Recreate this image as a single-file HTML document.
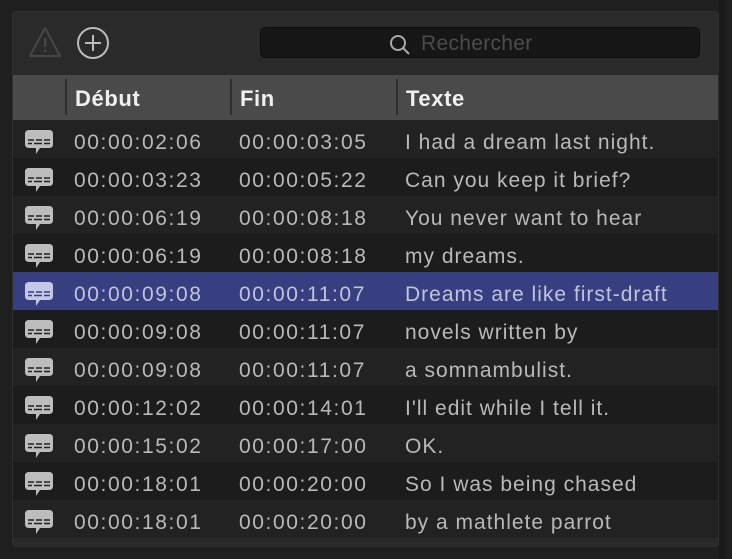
<!DOCTYPE html>
<html><head><meta charset="utf-8"><style>
body{margin:0;width:732px;height:559px;background:#1f1f1f;font-family:"Liberation Sans",sans-serif;position:relative;overflow:hidden}
.panel{position:absolute;left:12px;top:11px;width:707px;height:536px;background:#2a2a2a;border-radius:4px;border:1px solid #303030;box-sizing:border-box;overflow:hidden}
.rbar{position:absolute;left:719px;top:0;width:6px;height:559px;background:#1a1a1a}
.search{position:absolute;left:260px;top:27px;width:440px;height:31px;background:#161616;border-radius:5px;border:1px solid #0e0e0e;box-sizing:border-box}
.search span{position:absolute;left:160px;top:4px;font-size:21px;color:#4c4c4c;letter-spacing:0.3px}
.hdr{position:absolute;left:13px;top:75px;width:705px;height:45px;background:#4a4a4a}
.hdr .c{position:absolute;top:11px;font-size:22px;font-weight:bold;color:#f0f0f0;letter-spacing:0.6px}
.hdr .s{position:absolute;top:4px;width:2px;height:36px;background:#2e2e2e}
.row{position:absolute;left:13px;width:705px;height:38px;color:#b9b9b9;font-size:21px}
.row div{position:absolute;top:11px}
.row .t{letter-spacing:1.6px}
.row .x{letter-spacing:1px}
.row svg{position:absolute;left:12px;top:9px}
</style></head><body>
<div class="rbar"></div>
<div class="panel"></div>
<svg style="position:absolute;left:28px;top:26px" width="34" height="34" viewBox="0 0 34 34"><path d="M17 2 L32 30 L2 30 Z" fill="none" stroke="#474747" stroke-width="2" stroke-linejoin="round"/><rect x="16" y="12" width="2.2" height="9" fill="#474747"/><rect x="16" y="24" width="2.2" height="2.2" fill="#474747"/></svg>
<svg style="position:absolute;left:76px;top:26px" width="34" height="34" viewBox="0 0 34 34"><circle cx="17" cy="17" r="15" fill="none" stroke="#bbb" stroke-width="2"/><path d="M17 9V25M9 17H25" stroke="#bbb" stroke-width="2"/></svg>
<div class="search"><svg style="position:absolute;left:128px;top:6px" width="22" height="22" viewBox="0 0 22 22"><circle cx="9" cy="9" r="7" fill="none" stroke="#aaa" stroke-width="2"/><path d="M14 14L20 20" stroke="#aaa" stroke-width="2"/></svg><span>Rechercher</span></div>
<div class="hdr"><div class="s" style="left:52px"></div><div class="c" style="left:62px">Début</div><div class="s" style="left:217px"></div><div class="c" style="left:227px">Fin</div><div class="s" style="left:383px"></div><div class="c" style="left:393px">Texte</div></div>
<div id="rows"></div>
<script>
var d=[["00:00:02:06","00:00:03:05","I had a dream last night."],["00:00:03:23","00:00:05:22","Can you keep it brief?"],["00:00:06:19","00:00:08:18","You never want to hear"],["00:00:06:19","00:00:08:18","my dreams."],["00:00:09:08","00:00:11:07","Dreams are like first-draft"],["00:00:09:08","00:00:11:07","novels written by"],["00:00:09:08","00:00:11:07","a somnambulist."],["00:00:12:02","00:00:14:01","I'll edit while I tell it."],["00:00:15:02","00:00:17:00","OK."],["00:00:18:01","00:00:20:00","So I was being chased"],["00:00:18:01","00:00:20:00","by a mathlete parrot"]];
var h="";d.forEach(function(r,i){var sel=i==4;var bg=sel?"#373f80":(i%2?"#1c1c1c":"#222222");var ic=sel?"#c4c8e8":"#bdbdbd";var dk=sel?"#373f80":"#222";
h+='<div class="row" style="top:'+(120+i*38)+'px;background:'+bg+(sel?';color:#bfc3dc':'')+'"><svg width="30" height="30" viewBox="0 0 30 30"><path d="M4 1H24Q28 1 28 5V15Q28 19 24 19H15L11 25V19H4Q0 19 0 15V5Q0 1 4 1Z" fill="'+ic+'"/><path d="M3 11H9M11 11H17M19 11H25M3 14.5H7M9 14.5H17M19 14.5H25" stroke="'+dk+'" stroke-width="1.6"/></svg><div class="t" style="left:61px">'+r[0]+'</div><div class="t" style="left:226px">'+r[1]+'</div><div class="x" style="left:392px">'+r[2]+'</div></div>';});
document.getElementById("rows").innerHTML=h;
</script>
</body></html>
